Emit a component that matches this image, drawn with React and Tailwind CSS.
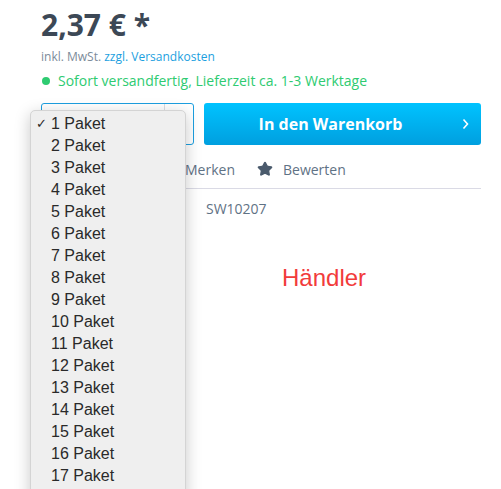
import { Star, Heart } from "lucide-react";

const OPTIONS = Array.from({ length: 17 }, (_, i) => `${i + 1} Paket`);

export default function App() {
    return (
        <div className="relative w-[501px] h-[489px] overflow-hidden bg-white" style={{ fontFamily: "'Open Sans', sans-serif" }}>
            <div className="pl-[41px] pr-[20px] pt-[6px]">
                {/* Preis */}
                <div className="text-[30px] leading-[38px] font-bold text-[#3c4856]">2,37 € *</div>
                <div className="mt-[5px] text-[12px] leading-[16px] text-[#7c8b9a]">
                    inkl. MwSt. <span className="text-[#1c9fe0]">zzgl. Versandkosten</span>
                </div>
                <div className="mt-[6px] flex items-center gap-[8px] text-[14px] leading-[20px] text-[#2ecb71]">
                    <span className="ml-[1px] w-[8px] h-[8px] rounded-full bg-[#2ecb71]"></span>
                    Sofort versandfertig, Lieferzeit ca. 1-3 Werktage
                </div>

                {/* Menge + Warenkorb */}
                <div className="mt-[12px] flex gap-[10px]">
                    <div className="w-[153px] h-[42px] border border-[#1c9fe0] rounded-[3px] flex">
                        <div className="flex-1"></div>
                        <div className="w-[29px] border-l border-[#d9dde3]"></div>
                    </div>
                    <button className="flex-1 h-[42px] pr-[24px] rounded-[3px] bg-gradient-to-b from-[#00c3ff] to-[#009fdf] text-white font-bold text-[16px] relative">
                        In den Warenkorb
                        <svg className="absolute right-[12px] top-[15px]" width="7" height="12" viewBox="0 0 7 12" fill="none">
                            <path d="M1.5 1.5 L5.5 6 L1.5 10.5" stroke="white" strokeWidth="1.6" />
                        </svg>
                    </button>
                </div>

                {/* Aktionen */}
                <div className="mt-[14px] h-[20px] flex items-center text-[14px] text-[#5f7285]">
                    <div className="ml-[125px] flex items-center gap-[5px]">
                        <Heart size={14} className="text-[#5f7285]" />
                        <span>Merken</span>
                    </div>
                    <div className="ml-[22px] flex items-center gap-[10px]">
                        <Star size={16} fill="#4a5a6c" stroke="#4a5a6c" />
                        <span>Bewerten</span>
                    </div>
                </div>
                <div className="mt-[9px] border-t border-[#dadae5]"></div>

                {/* Details */}
                <div className="mt-[10px] pl-[165px] text-[14px] leading-[20px] text-[#5f7285]">SW10207</div>
                <div className="mt-[45px] pl-[241px] text-[24px] leading-[28px] text-[#f23b3b]" style={{ fontFamily: "'Liberation Sans', Arial, sans-serif" }}>
                    Händler
                </div>
            </div>

            {/* Geöffnetes Auswahlmenü */}
            <div
                className="absolute left-[30px] top-[110px] w-[156px] h-[400px] rounded-[5px] bg-[#efefef] border border-[#d4d4d4] shadow-[0_4px_16px_rgba(0,0,0,0.22)] pt-[2px]"
                style={{ fontFamily: "'Liberation Sans', Arial, sans-serif" }}
            >
                {OPTIONS.map((label, i) => (
                    <div key={label} className="h-[22px] flex items-center text-[16px] text-[#2a2a2a]">
                        <span className="w-[20px] pl-[5px] text-[13px]">{i === 0 ? "✓" : ""}</span>
                        <span>{label}</span>
                    </div>
                ))}
            </div>
        </div>
    );
}
